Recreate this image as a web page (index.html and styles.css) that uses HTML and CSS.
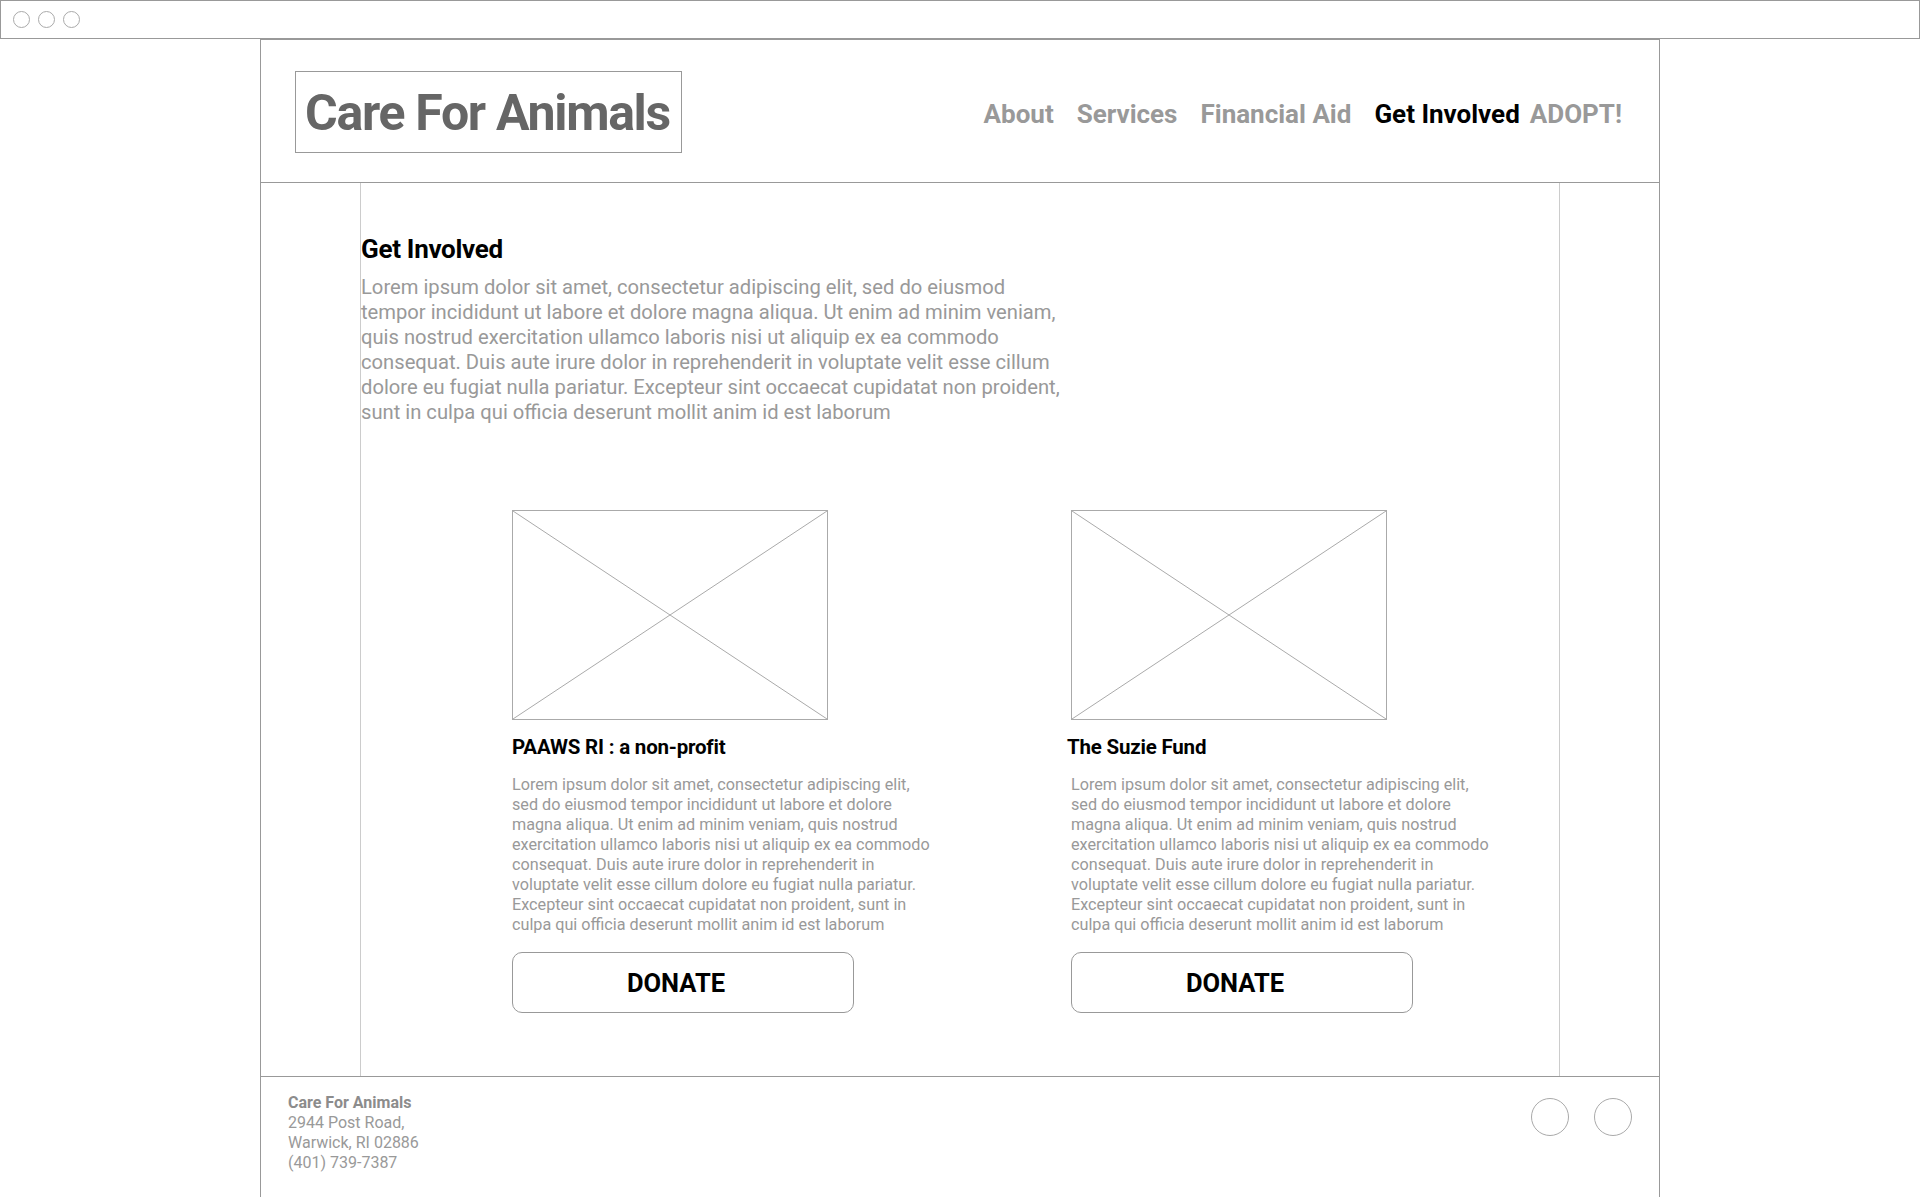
FILE: index.html
```html
<!DOCTYPE html>
<html lang="en">
<head>
<meta charset="utf-8">
<title>Care For Animals - Get Involved</title>
<link rel="stylesheet" href="styles.css">
</head>
<body>
<div class="browser-bar">
  <span class="dot"></span><span class="dot"></span><span class="dot"></span>
</div>
<div class="frame">
  <header class="site-header">
    <div class="logo">Care For Animals</div>
    <nav class="nav">
      <a class="nav-link">About</a>
      <a class="nav-link">Services</a>
      <a class="nav-link">Financial Aid</a>
      <a class="nav-link nav-link--active">Get Involved</a>
      <a class="nav-link nav-link--adopt">ADOPT!</a>
    </nav>
  </header>
  <main class="main">
    <div class="column">
      <h1 class="page-title">Get Involved</h1>
      <p class="intro">Lorem ipsum dolor sit amet, consectetur adipiscing elit, sed do eiusmod tempor incididunt ut labore et dolore magna aliqua. Ut enim ad minim veniam, quis nostrud exercitation ullamco laboris nisi ut aliquip ex ea commodo consequat. Duis aute irure dolor in reprehenderit in voluptate velit esse cillum dolore eu fugiat nulla pariatur. Excepteur sint occaecat cupidatat non proident, sunt in culpa qui officia deserunt mollit anim id est laborum</p>
      <div class="cards">
        <section class="card">
          <div class="placeholder">
            <svg class="placeholder-x" viewBox="0 0 100 100" preserveAspectRatio="none"><line x1="0" y1="0" x2="100" y2="100"/><line x1="100" y1="0" x2="0" y2="100"/></svg>
          </div>
          <h2 class="card-title">PAAWS RI : a non-profit</h2>
          <p class="card-text">Lorem ipsum dolor sit amet, consectetur adipiscing elit, sed do eiusmod tempor incididunt ut labore et dolore magna aliqua. Ut enim ad minim veniam, quis nostrud exercitation ullamco laboris nisi ut aliquip ex ea commodo consequat. Duis aute irure dolor in reprehenderit in voluptate velit esse cillum dolore eu fugiat nulla pariatur. Excepteur sint occaecat cupidatat non proident, sunt in culpa qui officia deserunt mollit anim id est laborum</p>
          <button class="donate">DONATE</button>
        </section>
        <section class="card">
          <div class="placeholder">
            <svg class="placeholder-x" viewBox="0 0 100 100" preserveAspectRatio="none"><line x1="0" y1="0" x2="100" y2="100"/><line x1="100" y1="0" x2="0" y2="100"/></svg>
          </div>
          <h2 class="card-title card-title--shift">The Suzie Fund</h2>
          <p class="card-text">Lorem ipsum dolor sit amet, consectetur adipiscing elit, sed do eiusmod tempor incididunt ut labore et dolore magna aliqua. Ut enim ad minim veniam, quis nostrud exercitation ullamco laboris nisi ut aliquip ex ea commodo consequat. Duis aute irure dolor in reprehenderit in voluptate velit esse cillum dolore eu fugiat nulla pariatur. Excepteur sint occaecat cupidatat non proident, sunt in culpa qui officia deserunt mollit anim id est laborum</p>
          <button class="donate">DONATE</button>
        </section>
      </div>
    </div>
  </main>
  <footer class="site-footer">
    <address class="address">
      <strong class="address-name">Care For Animals</strong><br>
      2944 Post Road,<br>
      Warwick, RI 02886<br>
      (401) 739-7387
    </address>
    <div class="socials">
      <span class="social"></span>
      <span class="social"></span>
    </div>
  </footer>
</div>
</body>
</html>
```

FILE: styles.css
```css
* { box-sizing: border-box; }

html, body {
  margin: 0;
  padding: 0;
  background: #fff;
}

body {
  font-family: Roboto, "Liberation Sans", sans-serif;
  color: #000;
  height: 1197px;
  overflow: hidden;
}

.browser-bar {
  height: 39px;
  border: 1px solid #999;
  display: flex;
  align-items: center;
  gap: 8px;
  padding-left: 12px;
}

.dot {
  width: 17px;
  height: 17px;
  border: 1px solid #aaa;
  border-radius: 50%;
}

.frame {
  margin-left: 260px;
  width: 1400px;
  height: 1158px;
  border: 1px solid #999;
  border-bottom: none;
  display: flex;
  flex-direction: column;
}

.site-header {
  height: 143px;
  border-bottom: 1px solid #999;
  display: flex;
  align-items: flex-start;
  justify-content: space-between;
  padding: 31px 37px 0 34px;
}

.logo {
  width: 387px;
  height: 82px;
  border: 1px solid #999;
  display: flex;
  align-items: center;
  justify-content: center;
  font-size: 50px;
  font-weight: 700;
  letter-spacing: -1.3px;
  color: #666;
  padding: 1px 2px 0 0;
}

.nav {
  display: flex;
  align-items: baseline;
  padding-top: 28px;
}

.nav-link {
  font-size: 26px;
  font-weight: 700;
  color: #999;
  margin-left: 23px;
  letter-spacing: 0;
}

.nav-link--active { color: #000; }
.nav-link--adopt { margin-left: 10px; }

.main {
  height: 894px;
  border-bottom: 1px solid #999;
  padding: 0 99px;
}

.column {
  height: 100%;
  border-left: 1px solid #ccc;
  border-right: 1px solid #ccc;
  padding-top: 51px;
}

.page-title {
  margin: 0;
  font-size: 26px;
  line-height: 31px;
  font-weight: 700;
  letter-spacing: -0.3px;
}

.intro {
  margin: 10px 0 0;
  width: 705px;
  font-size: 20.2px;
  line-height: 25px;
  color: #999;
}

.cards {
  display: grid;
  grid-template-columns: 425px 425px;
  column-gap: 134px;
  margin: 85px 0 0 151px;
}

.card {
  display: flex;
  flex-direction: column;
  align-items: flex-start;
}

.placeholder {
  width: 316px;
  height: 210px;
  border: 1px solid #aaa;
}

.placeholder-x {
  display: block;
  width: 100%;
  height: 100%;
}

.placeholder-x line {
  stroke: #aaa;
  stroke-width: 1;
  vector-effect: non-scaling-stroke;
}

.card-title {
  margin: 15px 0 0;
  font-size: 20.5px;
  line-height: 24px;
  font-weight: 700;
  letter-spacing: -0.2px;
}

.card-title--shift { margin-left: -4px; }

.card-text {
  margin: 16px 0 0;
  width: 422px;
  font-size: 16.2px;
  line-height: 20px;
  color: #999;
}

.donate {
  margin-top: 17px;
  width: 342px;
  height: 61px;
  border: 1px solid #999;
  border-radius: 10px;
  background: #fff;
  font-family: Roboto, "Liberation Sans", sans-serif;
  font-size: 25.5px;
  font-weight: 700;
  color: #000;
  padding: 0 14px 0 0;
}

.site-footer {
  flex: 1;
  display: flex;
  justify-content: space-between;
  align-items: flex-start;
  padding: 16px 27px 0 27px;
}

.address {
  font-style: normal;
  font-size: 16px;
  line-height: 20px;
  color: #999;
}

.address-name {
  font-weight: 700;
  color: #8c8c8c;
}

.socials {
  display: flex;
  gap: 25px;
  padding-top: 5px;
}

.social {
  width: 38px;
  height: 38px;
  border: 1px solid #aaa;
  border-radius: 50%;
}
```
